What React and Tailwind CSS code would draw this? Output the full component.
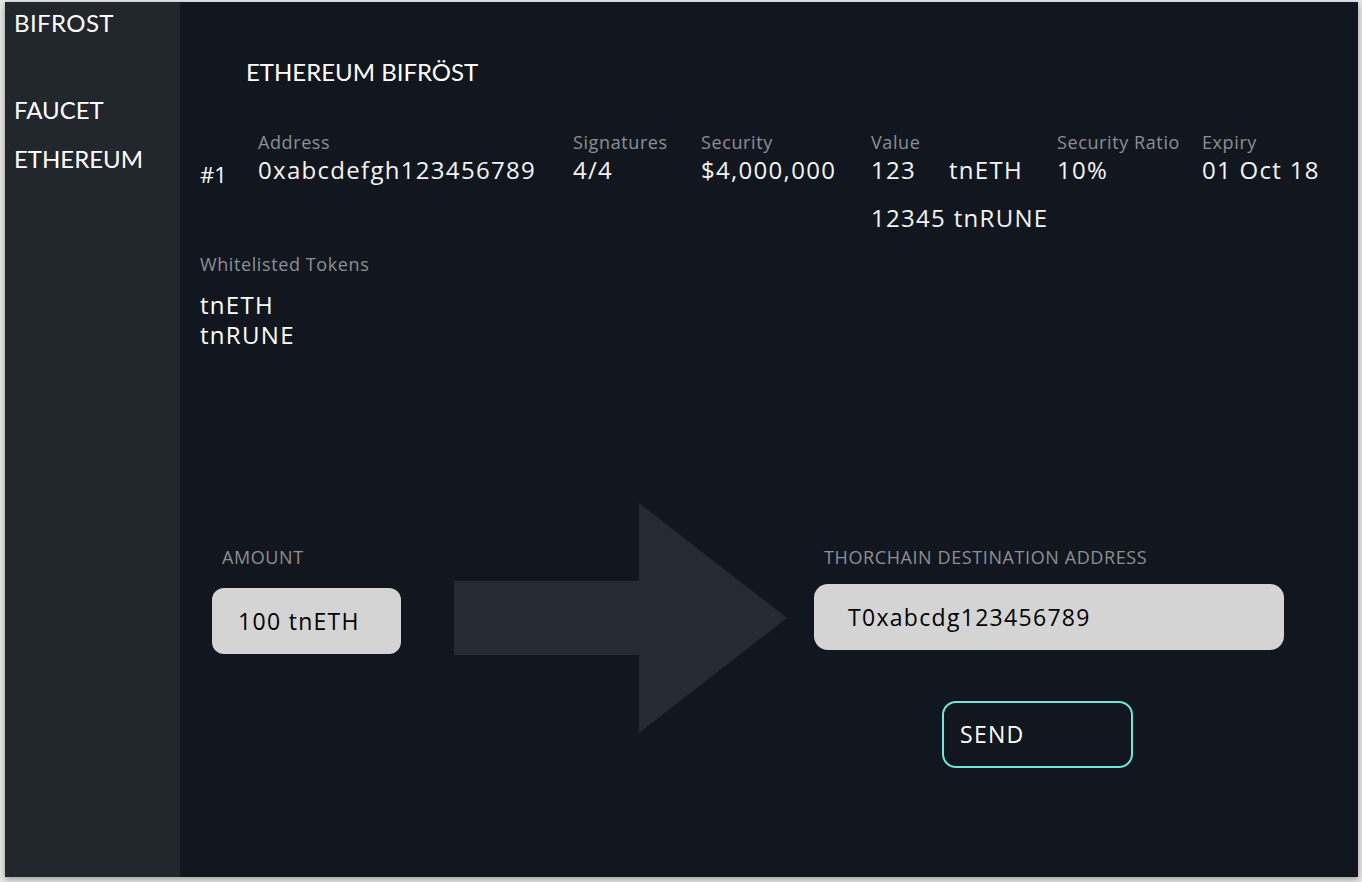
import React from "react";

const columns = [
  { label: "Address", value: "0xabcdefgh123456789", width: "w-[315px]" },
  { label: "Signatures", value: "4/4", width: "w-[128px]" },
  { label: "Security", value: "$4,000,000", width: "w-[170px]" },
];

const labelCls = "text-[18px] leading-[25px] tracking-[0.6px] text-[#8c8f93]";
const valueCls = "text-[24px] leading-[30px] tracking-[1.3px] font-medium text-[#f4f4f4]";

const Field = ({ label, children, className = "" }) => (
  <div className={className}>
    <div className={labelCls}>{label}</div>
    <div className={valueCls}>{children}</div>
  </div>
);

const Arrow = () => (
  <svg width="334" height="230" viewBox="0 0 334 230" className="block">
    <path d="M0 78 H185 V0 L333 115 L185 230 V152 H0 Z" fill="#262b33" />
  </svg>
);

export default function App() {
  return (
    <div className="w-[1362px] h-[882px] bg-[#e6e6e6] pt-[2px] pl-[5px] font-['Open_Sans',sans-serif]">
      <div className="flex w-[1353px] h-[875px] shadow-[0_2px_6px_rgba(0,0,0,0.35)]">
        {/* sidebar */}
        <aside className="w-[175px] bg-[#22272e] text-white font-['Lato',sans-serif] text-[24px] pl-[9px]">
          <div className="pt-[5px] leading-[32px] tracking-[0.4px]">BIFROST</div>
          <div className="mt-[55px] leading-[32px]">FAUCET</div>
          <div className="mt-[17px] leading-[32px]">ETHEREUM</div>
        </aside>

        {/* main */}
        <main className="flex-1 bg-[#12171f] text-white">
          <h1 className="pl-[66px] pt-[54px] text-[24px] leading-[32px] font-['Lato',sans-serif]">
            ETHEREUM BIFRÖST
          </h1>

          <div className="flex pl-[20px] pt-[42px]">
            <div className="w-[58px] pt-[29px] text-[22px] leading-[30px] font-medium">#1</div>
            {columns.map((c) => (
              <Field key={c.label} label={c.label} className={c.width}>
                {c.value}
              </Field>
            ))}
            <div className="w-[186px]">
              <div className={labelCls}>Value</div>
              <div className={"grid grid-cols-[78px_1fr] " + valueCls}>
                <span>123</span>
                <span>tnETH</span>
              </div>
              <div className={"mt-[18px] " + valueCls}>12345 tnRUNE</div>
            </div>
            <Field label="Security Ratio" className="w-[145px]">
              10%
            </Field>
            <Field label="Expiry">01 Oct 18</Field>
          </div>

          <div className="pl-[20px] mt-[19px]">
            <div className={labelCls}>Whitelisted Tokens</div>
            <div className="mt-[13px] text-[24px] leading-[30px] tracking-[1.3px] font-medium">
              <div>tnETH</div>
              <div>tnRUNE</div>
            </div>
          </div>

          <div className="flex items-start mt-[153px] pl-[32px]">
            <div className="pt-[42px]">
              <div className={"pl-[10px] " + labelCls}>AMOUNT</div>
              <div className="mt-[18px] w-[189px] h-[66px] rounded-[12px] bg-[#d4d4d4] flex items-center pl-[26px] text-[23px] tracking-[1.3px] font-medium text-black">
                100 tnETH
              </div>
            </div>
            <div className="ml-[53px]">
              <Arrow />
            </div>
            <div className="ml-[26px] pt-[42px]">
              <div className={"pl-[10px] " + labelCls}>THORCHAIN DESTINATION ADDRESS</div>
              <div className="mt-[14px] w-[470px] h-[66px] rounded-[14px] bg-[#d4d4d4] flex items-center pl-[34px] text-[23px] tracking-[1.3px] font-medium text-black">
                T0xabcdg123456789
              </div>
              <button className="mt-[51px] ml-[128px] w-[191px] h-[67px] rounded-[14px] border-2 border-[#6ee6d8] text-left pl-[16px] text-[23px] tracking-[1.3px] font-medium text-white">
                SEND
              </button>
            </div>
          </div>
        </main>
      </div>
    </div>
  );
}
